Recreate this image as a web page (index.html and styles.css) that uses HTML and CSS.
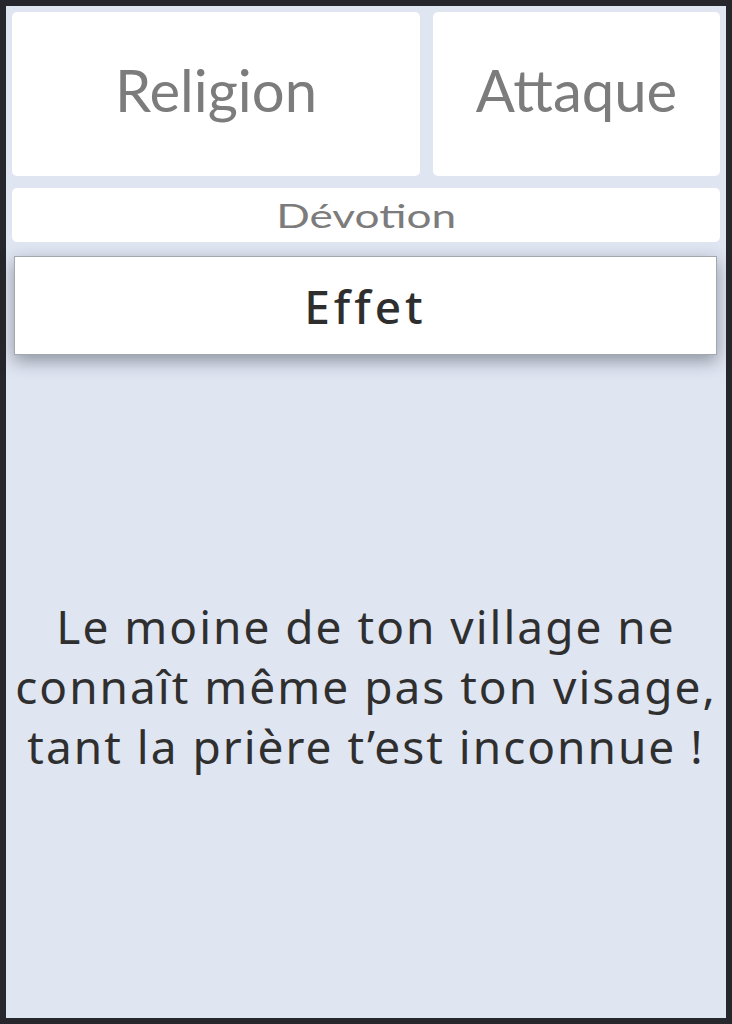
FILE: index.html
```html
<!DOCTYPE html>
<html lang="fr">
<head>
<meta charset="utf-8">
<link rel="stylesheet" href="styles.css">
</head>
<body>
<div class="app">
  <div class="top">
    <div class="card big">Religion</div>
    <div class="card big">Attaque</div>
  </div>
  <div class="card devotion"><span class="stretch">Dévotion</span></div>
  <div class="effet">Effet</div>
  <div class="text">
    <p>Le moine de ton village ne<br>connaît même pas ton visage,<br>tant la prière t’est inconnue !</p>
  </div>
</div>
</body>
</html>
```
FILE: styles.css
```css
html, body { margin: 0; padding: 0; }
body {
  background: #25272c;
  padding: 6px;
  width: 720px;
  height: 1012px;
}
.app {
  background: #dfe5f1;
  height: 1012px;
  box-sizing: border-box;
  padding: 6px;
  display: flex;
  flex-direction: column;
}
.top {
  display: grid;
  grid-template-columns: 408px 287px;
  column-gap: 13px;
}
.card {
  background: #fff;
  border-radius: 5px;
  color: #7c7c7c;
  font-family: Lato, "Liberation Sans", sans-serif;
  display: flex;
  align-items: center;
  justify-content: center;
}
.big {
  height: 164px;
  box-sizing: border-box;
  padding-bottom: 10px;
  font-size: 58px;
}
.devotion {
  margin-top: 12px;
  height: 54px;
  font-size: 33px;
}
.stretch {
  display: inline-block;
  transform: scaleX(1.34);
}
.effet {
  margin: 14px 3px 0 2px;
  height: 99px;
  box-sizing: border-box;
  background: #fff;
  border: 1px solid #a3a7b0;
  box-shadow: 0 6px 16px rgba(30, 35, 50, 0.42);
  display: flex;
  align-items: center;
  justify-content: center;
  font-family: "Noto Sans", "Open Sans", sans-serif;
  font-weight: 500;
  font-size: 46px;
  letter-spacing: 4px;
  color: #2e2e2e;
}
.text {
  flex: 1;
  display: flex;
  align-items: center;
  justify-content: center;
  padding-top: 4px;
}
.text p {
  margin: 0;
  text-align: center;
  font-family: "Noto Sans", "Open Sans", sans-serif;
  font-size: 46px;
  letter-spacing: 2px;
  line-height: 60px;
  color: #2f2f2f;
}
```
